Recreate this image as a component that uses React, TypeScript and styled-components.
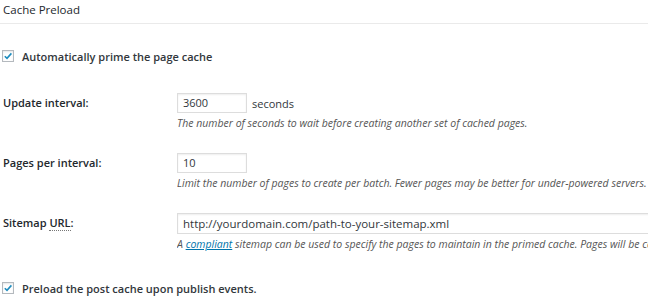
import React from 'react';
import styled, { createGlobalStyle } from 'styled-components';

const GlobalStyle = createGlobalStyle`
  html, body {
    margin: 0;
    padding: 0;
    background: #fff;
  }
  body {
    font-family: 'Open Sans', 'Noto Sans', sans-serif;
    color: #23282d;
    overflow: hidden;
  }
`;

const Page = styled.div`
  width: 648px;
  height: 305px;
  overflow: hidden;
`;

const Header = styled.h3`
  margin: 0;
  height: 23px;
  padding: 0 3px;
  line-height: 20px;
  font-size: 11.5px;
  font-weight: 400;
  border-bottom: 1px solid #eaeaea;
`;

const CheckRow = styled.label<{ top: number }>`
  display: flex;
  align-items: center;
  gap: 8px;
  height: 20px;
  margin-top: ${(p) => p.top}px;
  padding-left: 2px;
  font-size: 11px;
  font-weight: 600;
  color: #32373c;
`;

const Box = styled.span`
  width: 10px;
  height: 10px;
  border: 1px solid #b4b9be;
  box-shadow: inset 0 1px 2px rgba(0, 0, 0, 0.1);
  display: flex;
  align-items: center;
  justify-content: center;
`;

const Field = styled.div<{ top: number }>`
  display: grid;
  grid-template-columns: 174px 1fr;
  margin-top: ${(p) => p.top}px;
  padding-left: 3px;
`;

const Label = styled.div`
  font-size: 11px;
  font-weight: 600;
  line-height: 20px;
  color: #23282d;
`;

const Abbr = styled.span`
  border-bottom: 1px dotted #777;
`;

const Control = styled.div`
  display: flex;
  flex-direction: column;
  min-width: 0;
  overflow: hidden;
`;

const InputLine = styled.div`
  display: flex;
  align-items: center;
  gap: 5px;
  font-size: 11px;
  color: #32373c;
`;

const Input = styled.div<{ wide?: boolean }>`
  box-sizing: border-box;
  flex-shrink: 0;
  width: ${(p) => (p.wide ? '560px' : '70px')};
  height: ${(p) => (p.wide ? '21px' : '20px')};
  border: 1px solid #ddd;
  box-shadow: inset 0 1px 2px rgba(0, 0, 0, 0.07);
  padding: 0 5px;
  font-size: ${(p) => (p.wide ? '11.5px' : '11px')};
  line-height: ${(p) => (p.wide ? '19px' : '18px')};
  color: #32373c;
  white-space: nowrap;
`;

const Description = styled.p`
  margin: 3px 0 0;
  font-size: 10.5px;
  font-style: italic;
  line-height: 14px;
  color: #555;
  white-space: nowrap;
`;

const Link = styled.a`
  color: #0073aa;
  text-decoration: underline;
`;

const Check = () => (
  <Box>
    <svg width="10" height="10" viewBox="0 0 10 10">
      <path d="M1.8 5.2 L4 7.4 L8.4 2.4" fill="none" stroke="#1e8cbe" strokeWidth="1.6" />
    </svg>
  </Box>
);

const App: React.FC = () => {
  return (
    <Page>
      <GlobalStyle />
      <Header>Cache Preload</Header>
      <CheckRow top={22}>
        <Check />
        Automatically prime the page cache
      </CheckRow>
      <Field top={27}>
        <Label>Update interval:</Label>
        <Control>
          <InputLine>
            <Input>3600</Input>
            seconds
          </InputLine>
          <Description>The number of seconds to wait before creating another set of cached pages.</Description>
        </Control>
      </Field>
      <Field top={23}>
        <Label>Pages per interval:</Label>
        <Control>
          <InputLine>
            <Input>10</Input>
          </InputLine>
          <Description>
            Limit the number of pages to create per batch. Fewer pages may be better for under-powered servers.
          </Description>
        </Control>
      </Field>
      <Field top={23}>
        <Label>
          Sitemap <Abbr>URL</Abbr>:
        </Label>
        <Control>
          <InputLine>
            <Input wide>http://yourdomain.com/path-to-your-sitemap.xml</Input>
          </InputLine>
          <Description>
            A <Link href="#">compliant</Link> sitemap can be used to specify the pages to maintain in the primed
            cache. Pages will be cached according to the priorities specified in the sitemap.
          </Description>
        </Control>
      </Field>
      <CheckRow top={27}>
        <Check />
        Preload the post cache upon publish events.
      </CheckRow>
    </Page>
  );
};

export default App;
